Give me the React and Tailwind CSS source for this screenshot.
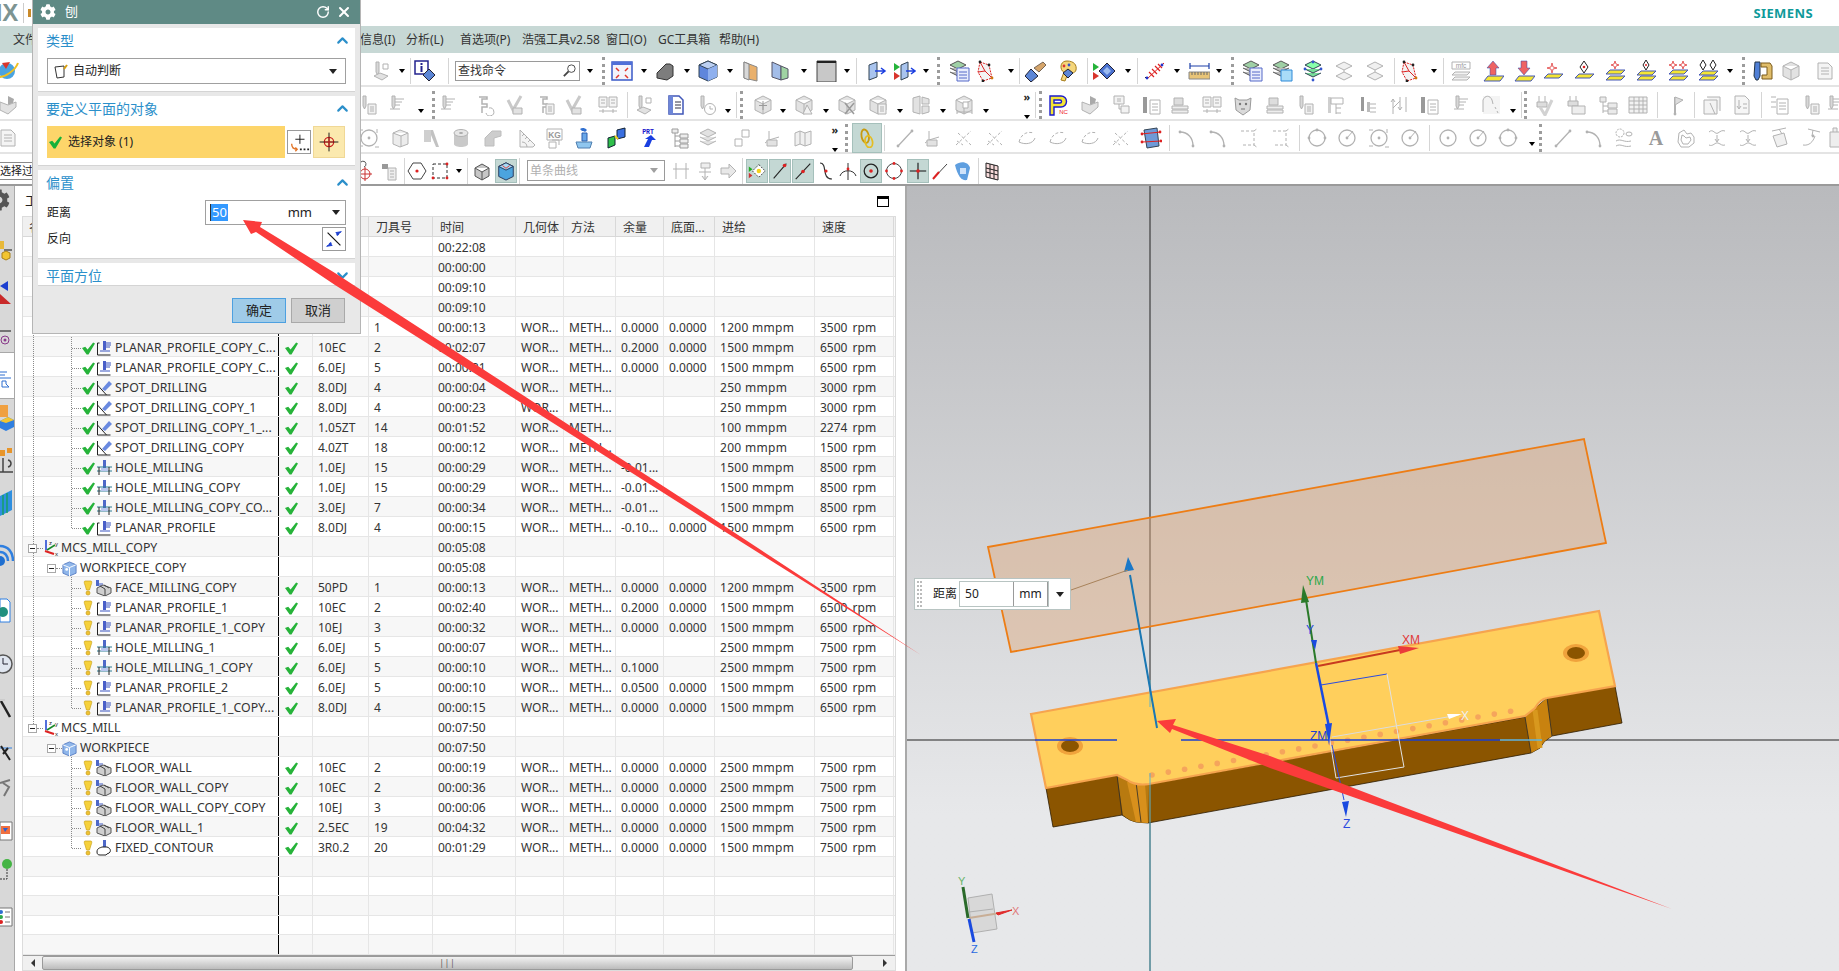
import React from "react";
import { ChevronUp, ChevronDown, RotateCw, X as CloseIcon } from "lucide-react";
import { FaCog } from "react-icons/fa";

const G = "#b2b2b2";
const L = "#e2e2e2";

// gray shapes reused by most of the disabled toolbar buttons
const spindle = <path d="M6 2h3v10l-1.5 3L6 12z" fill="#d8d8d8" stroke={G} />;
const teeth = <path d="M9 5h9M9 8h7M9 11h5M4 15h10" stroke={G} fill="none" />;
const docG = <path d="M11 10h8v10h-8zM13 13h4M13 15h4M13 17h4" fill="#f2f2f2" stroke={G} />;
const cubeG = <path d="M11 2l8 4v10l-8 4-8-4V6zM3 6l8 4 8-4M11 10v10" fill={L} stroke={G} />;
const dashCircle = <circle cx="11" cy="11" r="8" fill="none" stroke={G} strokeWidth="1.3" />;
const dot = (x, y, c = G) => <circle cx={x} cy={y} r="1.4" fill={c} />;

const ICONS = {
  mill: <>{spindle}{teeth}</>,
  millDoc: <>{spindle}{docG}</>,
  millBox: <>{spindle}<path d="M4 16l6-3 8 3-6 4z" fill={L} stroke={G} /><path d="M13 4h5v5h-5z" fill="none" stroke={G} /></>,
  millClock: <>{spindle}<circle cx="15" cy="15" r="5.5" fill="#fff" stroke={G} /><path d="M15 12v3h3" stroke={G} fill="none" /></>,
  sPath: <><path d="M6 3h8v2H9v5h5v3H9v6" fill="none" stroke={G} strokeWidth="1.5" /><path d="M13 19a4 4 0 1 0 3-5" fill="none" stroke={G} /></>,
  sDoc: <><path d="M5 3h7v2H8v5h4v3H8v6" fill="none" stroke={G} strokeWidth="1.5" />{docG}</>,
  check: <><path d="M4 6l5 10 8-14" fill="none" stroke="#c9c9c9" strokeWidth="3" /><path d="M9 14h9v6H9z" fill={L} stroke={G} /></>,
  twoDoc: <path d="M2 3h8v10H2zM12 3h8v10h-8zM4 6h4M4 9h4M14 6h4M14 9h4M2 17h18M6 15v4M16 15v4" fill="#f4f4f4" stroke={G} />,
  doc: <path d="M4 3h10l4 4v12H4zM7 8h8M7 11h8M7 14h8" fill="#f4f4f4" stroke={G} />,
  docBlue: <><path d="M4 2h10l4 4v14H4z" fill="#fff" stroke="#4057b8" strokeWidth="1.5" /><path d="M4 2h4v18H4z" fill="#6d86d8" /><path d="M10 8h6M10 11h6M10 14h6" stroke="#334" /></>,
  cubeG,
  cubeMove: <>{cubeG}<path d="M11 7v9M7 11.5h8" stroke="#9a9a9a" /></>,
  cubeTri: <>{cubeG}<path d="M14 11l5 9h-9z" fill="#f2f2f2" stroke={G} /></>,
  cubeX: <>{cubeG}<path d="M9 9l9 11M18 9L9 20" stroke="#9a9a9a" strokeWidth="1.5" /></>,
  cubeDoc: <>{cubeG}{docG}</>,
  cubeSplit: <><path d="M3 4l7-2v18l-7-2zM12 3l7 2v5h-7zM12 12h7v6l-7 2z" fill={L} stroke={G} /></>,
  cubeDim: <>{cubeG}<path d="M4 18h15M4 16v4M19 16v4" stroke={G} /><path d="M10 8h5v6h-5z" fill="#fff" stroke={G} /></>,
  wire: <path d="M4 6l7-3 8 3v11l-8 3-7-3zM4 6l8 3 7-3M12 9v11" fill="#ececec" stroke={G} />,
  grad: <><path d="M4 3h7v12H4z" fill="#cfcfcf" /><path d="M11 3l2 0 6 17h-3l-5-12z" fill="#c2c2c2" /></>,
  cyl: <><path d="M4 6v11c0 4 14 4 14 0V6z" fill="#c9c9c9" /><ellipse cx="11" cy="6" rx="7" ry="3.5" fill="#e6e6e6" stroke={G} /><ellipse cx="11" cy="6" rx="2" ry="1" fill="#aaa" /></>,
  wedge: <path d="M3 19v-8l7-7h9v5l-7 2v8z" fill="#cdcdcd" stroke="#bdbdbd" />,
  ruler: <path d="M4 3l15 15-2 2H4zM8 7l-2 2M11 10l-2 2M14 13l-2 2M6 15c3 0 5 2 5 5" fill="#f4f4f4" stroke={G} />,
  kg: <><path d="M3 2h15v11H3z" fill="#fff" stroke={G} /><text x="10.5" y="11" fontSize="8.5" fontWeight="700" textAnchor="middle" fill="#999" fontFamily="Liberation Sans">KG</text><path d="M5 15h7v6H5zM8 13h7v5" fill="none" stroke={G} /></>,
  gear: <><path d="M11 2l6 3-1 4-5 2z" fill="#aaa" /><path d="M3 8l8 3 8-3v5l-8 7-8-4z" fill={L} stroke={G} /></>,
  tree: <path d="M3 2h6v4H3zM6 6v14M6 9h5M6 14h5M6 19h5M11 7h8v4h-8zM11 12h8v4h-8zM11 17h8v4h-8z" fill="#ededed" stroke="#9c9c9c" />,
  layerG: <path d="M11 2l8 4-8 4-8-4zM3 10l8 4 8-4M3 14l8 4 8-4" fill={L} stroke={G} />,
  layerFlat: <><path d="M11 2l8 4-8 4-8-4zM11 12l8 4-8 4-8-4z" fill="#f0f0f0" stroke={G} /><path d="M11 10v2" stroke={G} /></>,
  squares: <path d="M11 3h7v7h-7zM4 12h7v7H4z" fill="#fff" stroke={G} />,
  axes: <><path d="M7 4v9l-4 3M7 13l10-3" fill="none" stroke={G} /><path d="M5 13h10v6H5z" fill={L} stroke={G} /></>,
  map: <path d="M3 6l5-2 5 2 6-2v13l-6 2-5-2-5 2zM8 4v13M13 6v13" fill="#f0f0f0" stroke={G} />,
  circ: <>{dashCircle}{dot(11, 11)}</>,
  circCorner: <>{dashCircle}{dot(11, 11)}<path d="M1 3h4M19 2v4M1 19h4M17 20h4" stroke={G} /></>,
  circDot: <>{dashCircle}{dot(3, 11)}{dot(19, 11)}{dot(11, 3)}</>,
  circSlash: <>{dashCircle}{dot(11, 11)}<path d="M11 11l6-7" stroke={G} /></>,
  lineG: <><path d="M4 19L18 4" stroke={G} strokeWidth="1.3" />{dot(4, 19)}{dot(18, 4)}</>,
  arcG: <><path d="M4 5c8 0 13 6 13 14" fill="none" stroke={G} strokeWidth="1.3" />{dot(4, 5)}{dot(17, 19)}</>,
  arcDash: <><path d="M3 15c2-8 8-11 15-9" fill="none" stroke={G} strokeDasharray="3 2" /><path d="M3 15c6 3 14 2 16-4" fill="none" stroke={G} /></>,
  cornerDash: <path d="M3 4h13v14H3M16 4l4-3M16 18l4 3" fill="none" stroke={G} strokeDasharray="3 2" />,
  cross: <path d="M3 18L18 4M5 6l13 12M4 14l6 4" fill="none" stroke={G} strokeDasharray="3 2" />,
  bear: <><path d="M3 4l4 2h8l4-2-1 12-7 5-7-5z" fill="#dadada" stroke="#9a9a9a" /><circle cx="8" cy="10" r="1.2" fill="#777" /><circle cx="14" cy="10" r="1.2" fill="#777" /><path d="M9 15h4" stroke="#777" /></>,
  stamp: <><path d="M5 4h9v7H5z" fill="#ddd" stroke={G} /><path d="M3 12h16v3H3zM3 16h16v3H3z" fill="#eee" stroke={G} /></>,
  tools: <><path d="M4 3h3v16H4z" fill="#cfcfcf" /><path d="M7 4h12v6H7zM12 10v10M12 14h5M12 19h5" fill="none" stroke={G} /></>,
  bars: <><path d="M4 3h3v14H4z" fill="#999" /><path d="M10 8h3v10h-3z" fill="#bbb" /><path d="M13 10h6M13 14h6M13 18h6" stroke={G} /></>,
  arrowsUD: <path d="M5 20V5l-2 3M5 5l2 3M12 3v13l-2-3M12 16l2-3M18 3v15M5 14l7-7" fill="none" stroke={G} />,
  boxArrow: <><path d="M3 3h4v16H3z" fill="#999" /><path d="M10 6h10v14H10zM12 10h6M12 13h6M12 16h6" fill="#fff" stroke={G} /></>,
  todo: <path d="M5 2h10v8H5zM8 5h4M8 7h4M10 10v5h2M12 12h8v7h-8z" fill="#f3f3f3" stroke={G} />,
  profile: <><path d="M3 2h17v18H3z" fill="#f4f4f4" /><path d="M3 18V6c2-5 7-5 9 0l1 4M15 13l1 2M17 17l1 2" fill="none" stroke={G} /></>,
  plug: <><path d="M5 2v6M11 2v6M3 8h10v5H3z" stroke={G} fill="#ddd" /><path d="M6 13l5 8 7-15" fill="none" stroke="#d2d2d2" strokeWidth="3" /></>,
  plugBox: <><path d="M5 2v5M11 2v5M3 7h10v5H3z" stroke={G} fill="#ddd" /><path d="M7 12h13v8H7z" fill="#eee" stroke={G} /></>,
  plugTree: <path d="M3 3h6v5H3zM6 8v11M6 12h5M6 17h5M11 9h9v5h-9zM11 15h9v5h-9z" fill="#eaeaea" stroke={G} />,
  tableG: <path d="M2 3h18v16H2zM2 7h18M2 11h18M2 15h18M7 3v16M12 3v16M16 3v16" fill="#f2f2f2" stroke={G} />,
  flag: <><path d="M8 3v17" stroke={G} strokeWidth="2" /><path d="M8 3l8 3-8 5z" fill="#ddd" stroke={G} />{dot(8, 20)}</>,
  pages: <path d="M3 6h13v14H3zM6 3h13v14M9 9l5 11" fill="#f3f3f3" stroke={G} />,
  pageDown: <><path d="M4 2h10l4 4v14H4z" fill="#f6f6f6" stroke={G} /><path d="M8 6v8M6 12l2 3 2-3M12 10h4M12 14h4" stroke={G} fill="none" /></>,
  target: <><path d="M5 4a3 3 0 1 1 4 3" fill="none" stroke="#555" /><circle cx="10" cy="14" r="5" fill="none" stroke="#c83232" /><path d="M3 14h14M10 7v14" stroke="#c83232" /></>,
  gearGray: <><path d="M3 4h6v5H3z" fill="#999" /><path d="M9 8h8v12H9zM11 11h4M11 14h4M11 17h4" fill="#eee" stroke={G} /></>,
  hexDot: <><path d="M7 3h8l5 8-5 8H7l-5-8z" fill="#fff" stroke="#444" /><circle cx="11" cy="11" r="1.6" fill="#d22" /></>,
  rectDash: <><path d="M4 4h14v14H4z" fill="none" stroke="#333" strokeDasharray="3 2" />{dot(4, 18, "#d22")}{dot(18, 18, "#d22")}{dot(18, 4, "#d22")}</>,
  cubeSmall: <path d="M4 8l7-4 7 4v8l-7 4-7-4zM4 8l7 4 7-4M11 12v8" fill="#c6c6c6" stroke="#555" />,
  cubeBlue: <><path d="M11 2l8 4v11l-8 4-8-4V6z" fill="#4ba4de" stroke="#235" /><path d="M3 6l8 4 8-4-8-4z" fill="#a9d9f4" stroke="#235" /><path d="M7 5l4 3 4-3" stroke="#d33" fill="none" /></>,
  barG: <path d="M6 3v16M16 3v16M3 9h16" stroke={G} fill="none" />,
  treeG: <path d="M7 3h9v5H7zM11 8v11M5 12h12M8 16l3 4 3-4" fill="#eee" stroke={G} />,
  arrowG: <path d="M4 8h8V4l7 7-7 7v-4H4z" fill="#e8e8e8" stroke={G} />,
  nodeMove: <><path d="M2 6l4 3-4 3z" fill="#2a2" /><path d="M2 13l4 3-4 3z" fill="#c33" /><path d="M13 4l7 7-7 7-7-7z" fill="#fff" stroke="#333" strokeDasharray="2 1.5" /><circle cx="13" cy="11" r="2.4" fill="#f2d21c" /></>,
  nodeLine: <><path d="M4 19L18 3" stroke="#222" strokeWidth="1.2" /><circle cx="16" cy="5" r="2" fill="#d22" /></>,
  nodeLine2: <><path d="M3 20L19 3" stroke="#222" strokeWidth="1.2" /><circle cx="11" cy="11.5" r="2" fill="#d22" /></>,
  curveS: <><path d="M5 3c8 0 1 16 12 16" fill="none" stroke="#333" strokeWidth="1.2" /><circle cx="11" cy="11" r="1.6" fill="#d22" /></>,
  curveT: <><path d="M3 16c2-7 14-7 16 0M11 3v17" fill="none" stroke="#333" />{dot(11, 9, "#d22")}</>,
  circRed: <><circle cx="11" cy="11" r="7.5" fill="none" stroke="#222" strokeWidth="1.4" /><circle cx="11" cy="11" r="2" fill="#d22" /></>,
  circFour: <><circle cx="11" cy="11" r="7.5" fill="none" stroke="#444" />{dot(11, 3.5, "#d22")}{dot(11, 18.5, "#d22")}{dot(3.5, 11, "#d22")}{dot(18.5, 11, "#d22")}</>,
  plus: <><path d="M11 2v18M2 11h18" stroke="#111" strokeWidth="1.2" /><circle cx="11" cy="11" r="2" fill="#d22" /></>,
  lineRed: <><path d="M4 19L18 4" stroke="#444" /><path d="M4 19l6-7" stroke="#d22" strokeWidth="2" /></>,
  surf: <><path d="M4 5c6-5 14-3 15 3l-3 12c-5 1-9-3-12-15z" fill="#5f9fe0" /><path d="M9 8h6v6H9z" fill="#cfe3fa" /></>,
  gridBlack: <path d="M5 3l12 3v14L5 17zM5 8l12 3M5 12l12 3M9 4v14M13 5v14" fill="#f7dada" stroke="#222" />,
  info: <><path d="M1 1h13v13H1z" fill="#fff" stroke="#23238e" strokeWidth="1.5" /><path d="M6.5 3h2v2h-2zM6.5 6h2v6h-2z" fill="#23238e" /><path d="M15 9l6 6-6 6-6-6z" fill="#5c86d6" stroke="#223" /></>,
  frame: <><path d="M1 2h20v18H1z" fill="#f3f3fb" stroke="#3a5ac8" strokeWidth="1.5" /><path d="M1 2h20v3H1z" fill="#4f6fd8" /><path d="M5 8l3 3M17 8l-3 3M5 18l3-3M17 18l-3-3" stroke="#e2362c" strokeWidth="1.5" /></>,
  bracket: <path d="M3 13l9-9h4l3 2v10l-6 4-10-2z" fill="#7d7d7d" stroke="#333" />,
  cubeB: <><path d="M11 1l9 4v12l-9 4-9-4V5z" fill="#5f86dc" stroke="#345" /><path d="M2 5l9 4 9-4-9-4z" fill="#bcd0f2" stroke="#345" /><path d="M11 9v12l9-4V5z" fill="#8fb0ee" /></>,
  planeO: <><path d="M4 2l13 5v14L4 18z" fill="#e9b06c" stroke="#888" /><path d="M4 2l5 2v16l-5-2z" fill="#d8d8d8" stroke="#888" /></>,
  planeG: <><path d="M3 2l9 4v14l-9-3z" fill="#a3bde8" stroke="#556" /><path d="M12 6l7 3v9l-7 2z" fill="#9fd3a3" stroke="#556" /></>,
  rectBlack: <><path d="M2 1h19v21H2z" fill="#c8c8c8" stroke="#444" /><path d="M2 1h19v2H2z" fill="#222" /></>,
  arrowBox: <><path d="M4 5l8-3v15l-8 3z" fill="#a9c4ee" stroke="#345" /><path d="M10 11h9M16 8l4 3-4 3" stroke="#1c3fe0" strokeWidth="1.5" fill="none" /></>,
  arrowBox2: <><path d="M0 3l6 4-6 4z" fill="#25b33a" /><path d="M0 12l6 4-6 4z" fill="#d8352c" /><path d="M7 5l7-3v15l-7 3z" fill="#a9c4ee" stroke="#345" /><path d="M12 11h8M17 8l4 3-4 3" stroke="#1c3fe0" strokeWidth="1.5" fill="none" /></>,
  layers: <><path d="M10 1l8 4-8 4-8-4z" fill="#9fd0a5" stroke="#555" /><path d="M2 8l8 4 8-4M2 12l8 4 8-4" fill="#bbb" stroke="#555" /><path d="M9 8h12v13H9z" fill="#e9edfc" stroke="#5468c8" /><path d="M11 12h8M11 15h8M11 18h8" stroke="#5468c8" /></>,
  layersBox: <><path d="M10 1l8 4-8 4-8-4z" fill="#9fd0a5" stroke="#555" /><path d="M2 8l8 4 8-4M2 12l8 4 8-4" fill="#bbb" stroke="#555" /><path d="M10 10h11v11H10z" fill="#a9dcf8" stroke="#2f8ad8" /></>,
  layersBlue: <><path d="M11 1l8 4-8 4-8-4z" fill="#8fa" stroke="#345" /><path d="M3 9l8 4 8-4M3 13l8 4 8-4" fill="#7d9" stroke="#345" />{dot(11, 2, "#35c")}{dot(3, 9, "#35c")}{dot(19, 9, "#35c")}{dot(11, 20, "#35c")}</>,
  redFrame: <><path d="M5 2l9 3 3 13-9 3-5-9z" fill="#f3f3f3" stroke="#d22" strokeDasharray="2 1" /><path d="M5 2l5 9 7 7M10 11l-7 1" stroke="#d22" fill="none" />{dot(5, 2, "#222")}{dot(14, 5, "#222")}{dot(17, 18, "#c71")}{dot(8, 21, "#222")}</>,
  diamondHand: <><path d="M6 9l7 7-7 6-6-6z" fill="#5c86d6" stroke="#223" /><path d="M9 8l9-6 3 3-7 7z" fill="#d6a56a" stroke="#765" /></>,
  palette: <><path d="M11 1c7 0 10 4 9 9-1 4-6 3-8 3l-3 8-4-1 3-8C4 11 3 1 11 1z" fill="#f5d67a" stroke="#a67c1a" /><circle cx="8" cy="6" r="1.4" fill="#d33" /><circle cx="13" cy="5" r="1.4" fill="#35c" /><path d="M12 9l5 4-5 5-5-5z" fill="#5c86d6" stroke="#223" /></>,
  diaArrow: <><path d="M0 3l6 4-6 4z" fill="#25b33a" /><path d="M0 12l6 4-6 4z" fill="#d8352c" /><path d="M14 3l8 8-8 8-8-8z" fill="#4b72d0" stroke="#223" /><path d="M14 7l4 4-4 4-4-4z" fill="#9dbcf0" /></>,
  hatch: <><path d="M3 19L20 3" stroke="#d22" /><path d="M5 12l5 5M8 9l5 5M11 6l5 5M14 4l4 4" stroke="#d22" strokeWidth="1.2" /><path d="M3 19l-2-2" stroke="#222" />{dot(3, 18, "#23c")}{dot(18, 5, "#23c")}</>,
  dimRuler: <><path d="M2 6h19M2 3v6M21 3v6" stroke="#1c3fa8" strokeWidth="1.2" /><path d="M1 12h21v7H1z" fill="#e8c477" stroke="#888" /><path d="M4 12v3M7 12v3M10 12v3M13 12v3M16 12v3M19 12v3" stroke="#666" /></>,
  mfc: <><path d="M2 2h18v7H2z" fill="#fff" stroke={G} /><text x="11" y="8" fontSize="6.5" textAnchor="middle" fill="#999" fontFamily="Liberation Sans">mfc</text><path d="M5 12h15l-3 3H2zM5 17h15l-3 3H2z" fill="#f2f2f2" stroke={G} /></>,
  upY: <><path d="M11 1l6 7h-3v7H8V8H5z" fill="#ee6363" stroke="#2f48a8" strokeWidth=".5" /><path d="M6 16h16l-4 5H2z" fill="#f4e534" stroke="#4557b5" /></>,
  downY: <><path d="M11 15l6-7h-3V1H8v7H5z" fill="#ee6363" stroke="#2f48a8" strokeWidth=".5" /><path d="M6 16h16l-4 5H2z" fill="#f4e534" stroke="#4557b5" /></>,
  starY: <><path d="M10 3l1 4 4 1-4 1-1 4-1-4-4-1 4-1z" fill="#fff" stroke="#d22" strokeWidth=".7" /><path d="M6 14h15l-4 4H2z" fill="#f4e534" stroke="#4557b5" /></>,
  diaY: <><path d="M11 1l4 6-4 6-4-6z" fill="#fff" stroke="#222" /><circle cx="11" cy="7" r="1.3" fill="#d22" /><path d="M6 14h15l-4 4H2z" fill="#f4e534" stroke="#4557b5" /></>,
  starYY: <><path d="M11 1l1 3 3 1-3 1-1 3-1-3-3-1 3-1z" fill="#fff" stroke="#d22" strokeWidth=".7" /><path d="M6 10h15l-4 4H2zM6 16h15l-4 4H2z" fill="#f4e534" stroke="#4557b5" /></>,
  diaYY: <><path d="M11 0l3 5-3 5-3-5z" fill="#fff" stroke="#222" /><circle cx="11" cy="5" r="1" fill="#d22" /><path d="M6 11h15l-4 4H2zM6 16h15l-4 4H2z" fill="#f4e534" stroke="#4557b5" /></>,
  stars2: <><path d="M6 1l1 3 3 1-3 1-1 3-1-3-3-1 3-1zM16 1l1 3 3 1-3 1-1 3-1-3-3-1 3-1z" fill="#fff" stroke="#d22" strokeWidth=".7" /><path d="M6 10h15l-4 4H2zM6 16h15l-4 4H2z" fill="#f4e534" stroke="#4557b5" /></>,
  dias2: <><path d="M6 0l3 5-3 5-3-5zM16 0l3 5-3 5-3-5z" fill="#fff" stroke="#222" /><path d="M6 11h15l-4 4H2zM6 16h15l-4 4H2z" fill="#f4e534" stroke="#4557b5" /></>,
  joinBlue: <><path d="M4 2h5v14l-2 4H5l-2-4z" fill="#4f7fd6" stroke="#234" /><path d="M10 3h9l2 3v13H11v-4h5V7h-6z" fill="#e0bd6a" stroke="#7a5a1a" /></>,
  globe: <><circle cx="10" cy="11" r="8" fill="#4aa3e0" /><path d="M2 17C8 17 18 11 21 3" stroke="#f0c020" strokeWidth="2" fill="none" /><path d="M5 3l4 6 4-7z" fill="#d8352c" /></>,
  chain: <><ellipse cx="9" cy="9" rx="4" ry="7.5" transform="rotate(-12 9 9)" fill="none" stroke="#c79a10" strokeWidth="2" /><ellipse cx="13" cy="15" rx="4" ry="6.5" transform="rotate(-12 13 15)" fill="none" stroke="#e5bd22" strokeWidth="2" /></>,
  millBlue: <><path d="M7 2a5 5 0 0 1 7 1l-2 2a3 3 0 0 0-3-1z" fill="#2f6fd0" /><path d="M9 6h5v8H9z" fill="#6aa7e8" stroke="#2a5fae" /><path d="M3 15h16l-2 6H5z" fill="#8fc6ef" stroke="#4f7fb0" /></>,
  cubesGreen: <><path d="M2 11l7-2v9l-7 3z" fill="#2fbf4a" stroke="#123" /><path d="M11 3l8-2v9l-8 2z" fill="#3a6fe0" stroke="#123" /><path d="M9 9l3 3" stroke="#f2d21c" strokeWidth="2" /></>,
  prt: <><text x="10" y="7" fontSize="6.5" textAnchor="middle" fill="#1a1acc" fontFamily="Liberation Mono" fontWeight="700">PRT</text><path d="M6 20l4-8-3 0 6-4 5 5-4 0-3 7z" fill="#1a3fe0" /></>,
  winBlue: <><path d="M4 3l13-2 2 18-12 2z" fill="#6f9ad8" stroke="#345" /><path d="M1 7l20-2M2 15l20-1" stroke="#d22" />{dot(2, 7, "#d22")}{dot(20, 5, "#d22")}{dot(2, 15, "#d22")}{dot(21, 14, "#d22")}</>,
  textA: <text x="11" y="18" fontSize="20" textAnchor="middle" fill="#9a9a9a" fontFamily="Liberation Serif" fontWeight="700">A</text>,
  heartBox: <path d="M4 6l5-3 3 4 4-1 3 4v6l-5 4H6l-3-5zM7 8l2 1 2 2 4-1 1 3-3 4H8l-2-4z" fill="#fff" stroke={G} />,
  curves: <><path d="M3 5c4-4 6 3 9 1s4-3 7-2M3 18c4 2 6-3 9-2s4 3 7 2" fill="none" stroke={G} /><path d="M11 8v6M9 12l2 3 2-3" stroke={G} fill="none" /></>,
  circles: <><ellipse cx="7" cy="6" rx="4" ry="4" fill="none" stroke={G} strokeDasharray="2 1" /><ellipse cx="16" cy="7" rx="3" ry="2" fill="none" stroke={G} /><path d="M3 14c5-3 8 2 15 0M3 19c5-3 8 2 15 0" fill="none" stroke={G} /></>,
  sheet: <><path d="M4 4l14-3M11 2l3 5" stroke={G} /><path d="M5 9l11-3 3 11-10 3z" fill="#f0f0f0" stroke={G} /></>,
  trim: <><path d="M8 2l12 3M3 18c6 1 10-3 12-9M13 3l-1 6" fill="none" stroke={G} />{dot(13, 9)}</>,
  pillar: <path d="M6 5h10v15H6zM9 5V1h4v4" fill="#eee" stroke={G} />,
  pNc: <><path d="M3 2h11a5 5 0 0 1 0 11H7v8H3zM7 6v3h6a1.5 1.5 0 0 0 0-3z" fill="#f4e534" stroke="#1a1acc" strokeWidth="1.4" /><text x="16.5" y="20" fontSize="6" textAnchor="middle" fill="#e12" fontFamily="Liberation Sans">NC</text></>,
  docGray: <path d="M4 3h14v16H4zM8 8l6 6M14 8l-6 6" fill="#f5f5f5" stroke={G} />,
  ptList: <path d="M3 3h5M3 8h5M3 13h5M9 5h11v15H9zM11 9h7M11 12h7M11 15h7" fill="none" stroke={G} />,
};

const Ic = ({ n, className = "w-[22px] h-[22px]" }) => (
  <svg viewBox="0 0 22 22" className={className}>{ICONS[n]}</svg>
);

const row1 = [
  [8, "globe"], [381, "millBox"], [402, "^"], [410, "|"], [425, "info"], [448, "|"], [517.5, "search"], [590, "^"], [603, ":"],
  [622, "frame"], [644, "^"], [665, "bracket"], [687, "^"], [708, "cubeB"], [730, "^"], [751, "planeO"], [780, "planeG"], [804, "^"],
  [826, "rectBlack"], [847, "^"], [856, "|"], [876, "arrowBox"], [905, "arrowBox2"], [926, "^"], [938, ":"], [959, "layers"], [986, "redFrame"],
  [1011, "^"], [1019, "|"], [1036, "diamondHand"], [1067, "palette"], [1087, "|"], [1104, "diaArrow"], [1128, "^"], [1137, "|"], [1155, "hatch"],
  [1177, "^"], [1199, "dimRuler"], [1219, "^"], [1232, ":"], [1252, "layers"], [1282, "layersBox"], [1313, "layersBlue"], [1344, "layerFlat"], [1375, "layerFlat"],
  [1394, "|"], [1410, "redFrame"], [1434, "^"], [1443, "|"], [1461, "mfc"], [1493, "upY"], [1524, "downY"], [1553, "starY"], [1584, "diaY"],
  [1615, "starYY"], [1646, "diaYY"], [1678, "stars2"], [1708, "dias2"], [1730, "^"], [1743, ":"], [1762, "joinBlue"], [1791, "cubeG"], [1825, "doc"],
];

const row2 = [
  [8, "gear"], [368, "millDoc"], [397, "mill"], [421, "v"], [433, ":"], [448, "mill"], [484, "sPath"], [515, "check"], [546, "sDoc"], [574, "check"], [608, "twoDoc"], [627, "|"],
  [644, "millBox"], [676, "docBlue"], [706, "millClock"], [728, "v"], [736, "|"], [741, ":"], [763, "cubeMove"], [783, "v"], [804, "cubeTri"], [826, "v"], [847, "cubeX"],
  [878, "cubeDoc"], [900, "v"], [921, "cubeSplit"], [943, "v"], [964, "cubeDim"], [986, "v"], [1027, "more"], [1035, "|"], [1040, ":"], [1058, "pNc"], [1090, "gear"],
  [1120, "todo"], [1151, "boxArrow"], [1180, "stamp"], [1212, "twoDoc"], [1243, "bear"], [1275, "stamp"], [1305, "millDoc"], [1335, "tools"], [1368, "bars"], [1399, "arrowsUD"], [1429, "boxArrow"],
  [1461, "mill"], [1491, "profile"], [1513, "v"], [1521, "|"], [1525, ":"], [1545, "plug"], [1576, "plugBox"], [1608, "plugTree"], [1638, "tableG"], [1657, "|"], [1678, "flag"], [1694, "|"],
  [1712, "pages"], [1742, "pageDown"], [1761, "|"], [1779, "ptList"], [1811, "millDoc"], [1835, "mill"],
];

const row3 = [
  [8, "doc"], [369, "circCorner"], [400, "wire"], [431, "grad"], [461, "cyl"], [493, "wedge"], [527, "ruler"], [555, "kg"], [584, "millBlue"], [617, "cubesGreen"], [649, "prt"],
  [680, "tree"], [708, "layerG"], [742, "squares"], [773, "axes"], [803, "map"], [835, "more"], [846, ":"], [866.5, "chain", 1, 30], [884, "|"], [905, "lineG"], [933, "axes"], [964, "cross"],
  [995, "cross"], [1027, "arcDash"], [1058, "arcDash"], [1090, "arcDash"], [1121, "cross"], [1151, "winBlue"], [1169, "|"], [1187, "arcG"], [1218, "arcG"], [1249, "cornerDash"], [1281, "cornerDash"],
  [1299, "|"], [1317, "circDot"], [1347, "circSlash"], [1379, "circCorner"], [1410, "circSlash"], [1429, "|"], [1448, "circ"], [1478, "circSlash"], [1508, "circDot"], [1532, "v"], [1540, ":"],
  [1563, "lineG"], [1594, "arcG"], [1624, "circles"], [1656, "textA"], [1686, "heartBox"], [1717, "curves"], [1748, "curves"], [1779, "sheet"], [1811, "trim"], [1835, "pillar"],
];

const row4 = [
  [16, "filter"], [366, "target"], [390, "gearGray"], [404, "|"], [417, "hexDot"], [440, "rectDash"], [459, "^"], [467, "|"], [482, "cubeSmall"], [506, "cubeBlue", 1], [519, "|"],
  [596, "combo"], [681, "barG"], [705, "treeG"], [728, "arrowG"], [742, "|"], [757, "nodeMove", 1], [779.5, "nodeLine", 1], [802.5, "nodeLine2", 1], [826, "curveS"], [848, "curveT"],
  [871, "circRed", 1], [894, "circFour"], [918, "plus", 1], [940, "lineRed"], [962, "surf"], [978, "|"], [992, "gridBlack"],
];

const widthOf = ([, n, , w]) => {
  if (w) return w;
  if (n === "|") return 1;
  if (n === ":") return 3;
  if (n === "^" || n === "v") return 7;
  if (n === "search") return 125;
  if (n === "combo") return 138;
  if (n === "filter") return 32;
  if (n === "more") return 12;
  return 22;
};

const Caret = ({ low }) => (
  <div className={`w-0 h-0 ml-0 border-x-[3.5px] border-t-[4px] border-x-transparent border-t-black ${low ? "mt-[12px]" : ""}`} />
);

const ToolItem = ({ item }) => {
  const [, n, on] = item;
  if (n === "|") return <div className="w-px h-[26px] bg-[#d5d5d5]" />;
  if (n === ":") return <div className="w-[3px] h-[28px] border-l-[3px] border-dotted border-[#9c9c9c]" />;
  if (n === "^") return <Caret />;
  if (n === "v") return <Caret low />;
  if (n === "more")
    return (
      <div className="w-[12px] h-[28px] flex flex-col items-center justify-between text-[11px] leading-[12px] font-bold text-[#222]">
        <span>»</span>
        <Caret />
      </div>
    );
  if (n === "search")
    return (
      <div className="w-[125px] h-[20px] border border-[#9a9a9a] bg-white flex items-center justify-between pl-[2px] pr-[2px] text-[12px] text-[#333]">
        <span>查找命令</span>
        <svg viewBox="0 0 16 16" className="w-[15px] h-[15px]">
          <circle cx="10" cy="6" r="4" fill="#fff" stroke="#444" />
          <path d="M7 9l-5 5" stroke="#444" strokeWidth="2" />
        </svg>
      </div>
    );
  if (n === "combo")
    return (
      <div className="w-[138px] h-[21px] border border-[#9a9a9a] bg-white flex items-center justify-between pl-[2px] pr-[6px] text-[12px] text-[#b0b0b0]">
        <span>单条曲线</span>
        <div className="w-0 h-0 border-x-[4px] border-t-[5px] border-x-transparent border-t-[#a0a0a0]" />
      </div>
    );
  if (n === "filter")
    return (
      <div className="w-[32px] h-[18px] border-y border-[#8a8a8a] bg-white text-[11px] leading-[16px] text-[#222] overflow-hidden whitespace-nowrap">选择过</div>
    );
  if (on === 1)
    return (
      <div className={`${item[3] ? "w-[30px] h-[30px]" : "w-[22px] h-[24px]"} flex items-center justify-center bg-[#c4d8d4] border border-[#a5c0bb]`}>
        <Ic n={n} className="w-[20px] h-[20px] shrink-0" />
      </div>
    );
  return <Ic n={n} />;
};

// each button sits at its own spot in the bar, so the gap is worked out from the list
const Toolbar = ({ items, className }) => {
  let right = 0;
  return (
    <div className={`flex items-center pt-[3px] border-b-2 border-[#e4e4e4] ${className}`}>
      {items.map((item, i) => {
        const w = widthOf(item);
        const left = item[0] - w / 2;
        const gap = left - right;
        right = left + w;
        return (
          <div key={i} className="shrink-0 flex items-center justify-center" style={{ marginLeft: gap, width: w }}>
            <ToolItem item={item} />
          </div>
        );
      })}
    </div>
  );
};

const menu = [
  ["文件", 13], ["信息(I)", 360], ["分析(L)", 406], ["首选项(P)", 460], ["浩强工具v2.58", 522], ["窗口(O)", 606], ["GC工具箱", 658], ["帮助(H)", 719],
];

const W = "WOR...";
const M = "METH...";
const Z = "0.0000";
const op = (name, icon, bulb, tool, no, time, stock, floor, feed, speed, last) => ({
  name, icon, bulb, tool, no, time, stock, floor, feed, speed, last, kind: "op",
});

const rows = [
  { kind: "hidden", time: "00:22:08" },
  { kind: "hidden", time: "00:00:00" },
  { kind: "hidden", time: "00:09:10" },
  { kind: "hidden", time: "00:09:10" },
  { kind: "hidden", no: "1", time: "00:00:13", wor: true, stock: Z, floor: Z, feed: "1200 mmpm", speed: "3500 rpm" },
  op("PLANAR_PROFILE_COPY_C...", "planar", false, "10EC", "2", "00:02:07", "0.2000", Z, "1500 mmpm", "6500 rpm"),
  op("PLANAR_PROFILE_COPY_C...", "planar", false, "6.0EJ", "5", "00:00:31", Z, Z, "1500 mmpm", "6500 rpm"),
  op("SPOT_DRILLING", "spot", false, "8.0DJ", "4", "00:00:04", "", "", "250 mmpm", "3000 rpm"),
  op("SPOT_DRILLING_COPY_1", "spot", false, "8.0DJ", "4", "00:00:23", "", "", "250 mmpm", "3000 rpm"),
  op("SPOT_DRILLING_COPY_1_...", "spot", false, "1.05ZT", "14", "00:01:52", "", "", "100 mmpm", "2274 rpm"),
  op("SPOT_DRILLING_COPY", "spot", false, "4.0ZT", "18", "00:00:12", "", "", "200 mmpm", "1500 rpm"),
  op("HOLE_MILLING", "hole", false, "1.0EJ", "15", "00:00:29", "-0.01...", "", "1500 mmpm", "8500 rpm"),
  op("HOLE_MILLING_COPY", "hole", false, "1.0EJ", "15", "00:00:29", "-0.01...", "", "1500 mmpm", "8500 rpm"),
  op("HOLE_MILLING_COPY_CO...", "hole", false, "3.0EJ", "7", "00:00:34", "-0.01...", "", "1500 mmpm", "8500 rpm"),
  op("PLANAR_PROFILE", "planar", false, "8.0DJ", "4", "00:00:15", "-0.10...", Z, "1500 mmpm", "6500 rpm", true),
  { kind: "mcs", name: "MCS_MILL_COPY", time: "00:05:08" },
  { kind: "wp", name: "WORKPIECE_COPY", time: "00:05:08" },
  op("FACE_MILLING_COPY", "face", true, "50PD", "1", "00:00:13", Z, Z, "1200 mmpm", "3500 rpm"),
  op("PLANAR_PROFILE_1", "planar", true, "10EC", "2", "00:02:40", "0.2000", Z, "1500 mmpm", "6500 rpm"),
  op("PLANAR_PROFILE_1_COPY", "planar", true, "10EJ", "3", "00:00:32", Z, Z, "1500 mmpm", "6500 rpm"),
  op("HOLE_MILLING_1", "hole", true, "6.0EJ", "5", "00:00:07", "", "", "2500 mmpm", "7500 rpm"),
  op("HOLE_MILLING_1_COPY", "hole", true, "6.0EJ", "5", "00:00:10", "0.1000", "", "2500 mmpm", "7500 rpm"),
  op("PLANAR_PROFILE_2", "planar", true, "6.0EJ", "5", "00:00:10", "0.0500", Z, "1500 mmpm", "6500 rpm"),
  op("PLANAR_PROFILE_1_COPY...", "planar", true, "8.0DJ", "4", "00:00:15", Z, Z, "1500 mmpm", "6500 rpm", true),
  { kind: "mcs", name: "MCS_MILL", time: "00:07:50", end: true },
  { kind: "wp", name: "WORKPIECE", time: "00:07:50", end: true },
  op("FLOOR_WALL", "face", true, "10EC", "2", "00:00:19", Z, Z, "2500 mmpm", "7500 rpm"),
  op("FLOOR_WALL_COPY", "face", true, "10EC", "2", "00:00:36", Z, Z, "2500 mmpm", "7500 rpm"),
  op("FLOOR_WALL_COPY_COPY", "face", true, "10EJ", "3", "00:00:06", Z, Z, "2500 mmpm", "7500 rpm"),
  op("FLOOR_WALL_1", "face", true, "2.5EC", "19", "00:04:32", Z, Z, "1500 mmpm", "7500 rpm"),
  op("FIXED_CONTOUR", "contour", true, "3R0.2", "20", "00:01:29", Z, Z, "1500 mmpm", "7500 rpm", true),
  { kind: "empty" },
  { kind: "empty" },
  { kind: "empty" },
  { kind: "empty" },
  { kind: "empty" },
];

const OpIcon = ({ type }) => {
  if (type === "planar")
    return (
      <svg viewBox="0 0 16 16" className="w-[16px] h-[16px]">
        <path d="M1.5 3v12h13M1.5 3h2" fill="none" stroke="#222" />
        <path d="M7 1h3v9H7z" fill="#4a5fc8" />
        <path d="M10 3h5M10 5h5M10 7h4M4 11h10" stroke="#3a55c0" />
      </svg>
    );
  if (type === "spot")
    return (
      <svg viewBox="0 0 16 16" className="w-[16px] h-[16px]">
        <path d="M1.5 1v14h13M1.5 5l9 10" fill="none" stroke="#222" />
        <path d="M6 9l7-8 3 3-7 7z" fill="#6a8ae0" />
      </svg>
    );
  if (type === "hole")
    return (
      <svg viewBox="0 0 16 16" className="w-[16px] h-[16px]">
        <path d="M7 0h3v8H7z" fill="#4e68c8" />
        <path d="M1 7h15M1 11h15" stroke="#2f7f96" />
        <path d="M3 7v8M13 7v8" stroke="#222" />
        <path d="M5 8h7v3H5z" fill="#b9c6ee" />
      </svg>
    );
  if (type === "face")
    return (
      <svg viewBox="0 0 16 16" className="w-[16px] h-[16px]">
        <path d="M0 0h3v6H0z" fill="#4e68c8" />
        <path d="M3 4h4M3 6h3" stroke="#3a55c0" />
        <path d="M1 8l6-3 8 3v5l-6 3-8-3z" fill="#cfcfcf" stroke="#555" />
        <path d="M4 6l5 3M8 5l5 3M9 9v7" stroke="#444" fill="none" />
      </svg>
    );
  return (
    <svg viewBox="0 0 16 16" className="w-[16px] h-[16px]">
      <path d="M7 0h3v7H7z" fill="#4e68c8" />
      <path d="M1 12c0-4 3-4 5-5h5c3 1 4 3 3 5s-3 1-4 3H4c-2 0-3-1-3-3z" fill="#fff" stroke="#222" />
    </svg>
  );
};

const Check = () => (
  <svg viewBox="0 0 14 14" className="w-[13px] h-[13px]">
    <path d="M0 6.5L3.5 5 6 8 12 .5 14 1.5 7 13.5H5z" fill="#26b33a" />
  </svg>
);

const Bulb = () => (
  <svg viewBox="0 0 14 16" className="w-[14px] h-[16px]">
    <path d="M4 1h6c1 0 1 2 0 4L8.5 10h-3L4 5C3 3 3 1 4 1z" fill="#f6d13c" stroke="#c9a21a" strokeWidth=".7" />
    <circle cx="7" cy="13" r="2" fill="#f0c030" stroke="#c9a21a" strokeWidth=".7" />
  </svg>
);

const Minus = () => (
  <div className="w-[9px] h-[9px] shrink-0 border border-[#a8a8a8] bg-white flex items-center justify-center relative">
    <div className="w-[5px] h-px bg-[#222]" />
  </div>
);

const McsIcon = () => (
  <svg viewBox="0 0 16 16" className="w-[16px] h-[16px] shrink-0">
    <path d="M4 10l8-5" fill="none" stroke="#1a8a2a" strokeWidth="1.5" />
    <path d="M3 0v10" stroke="#1a3fd0" strokeWidth="1.5" />
    <path d="M2 11l9 3" stroke="#d22" strokeWidth="2" />
    <text x="6" y="5" fontSize="6" fill="#222" fontFamily="Liberation Sans">z</text>
    <text x="12" y="6" fontSize="6" fill="#222" fontFamily="Liberation Sans">y</text>
    <text x="12" y="16" fontSize="6" fill="#222" fontFamily="Liberation Sans">x</text>
  </svg>
);

const WpIcon = () => (
  <svg viewBox="0 0 16 16" className="w-[15px] h-[15px] shrink-0">
    <path d="M1 4l7-3 7 3v9l-7 3-7-3z" fill="#8fb6ea" stroke="#5c80c4" />
    <path d="M1 4l7 3 7-3M8 7v9" fill="none" stroke="#fff" />
    <circle cx="5" cy="9" r="1.5" fill="#fff" />
  </svg>
);

const NameCell = ({ row, index }) => {
  const outer = index < 24;
  return (
    <div className="relative h-full pt-[3px] flex items-center overflow-hidden whitespace-nowrap border-r border-black text-[12.3px]">
      {outer && <span className="absolute left-[10px] top-0 bottom-0 border-l border-dotted border-[#8a8a8a]" />}
      {index === 24 && <span className="absolute left-[10px] top-0 h-[9px] border-l border-dotted border-[#8a8a8a]" />}
      {row.kind === "mcs" && (
        <div className="relative flex items-center pl-[5px]">
          <Minus />
          <span className="w-[6px] border-t border-dotted border-[#8a8a8a]" />
          <McsIcon />
          <span className="ml-[2px]">{row.name}</span>
        </div>
      )}
      {row.kind === "wp" && (
        <div className="relative flex items-center pl-[24px]">
          <Minus />
          <span className="w-[6px] border-t border-dotted border-[#8a8a8a]" />
          <WpIcon />
          <span className="ml-[3px]">{row.name}</span>
        </div>
      )}
      {row.kind === "op" && (
        <>
          <span className={`absolute left-[48px] top-0 border-l border-dotted border-[#8a8a8a] ${row.last ? "h-[11px]" : "bottom-0"}`} />
          <div className="relative flex items-center pl-[49px]">
            <span className="w-[9px] border-t border-dotted border-[#8a8a8a]" />
            <div className="w-[14px] flex justify-center shrink-0">{row.bulb ? <Bulb /> : <Check />}</div>
            <div className="ml-[1px] shrink-0"><OpIcon type={row.icon} /></div>
            <span className="ml-[3px]">{row.name}</span>
          </div>
        </>
      )}
    </div>
  );
};

const cols = "grid grid-cols-[256px_34px_56px_64px_83px_48px_52px_48px_51px_100px_79px]";
const cell = "h-full pt-[3px] flex items-center pl-[5px] border-r border-[#e6e6e6] overflow-hidden whitespace-nowrap";

const TableRow = ({ row, index }) => {
  const isOp = row.kind === "op" || row.wor;
  return (
    <div className={`${cols} h-[20px] border-b border-[#e6e6e6] ${index % 2 ? "bg-[#f7f7f7]" : "bg-white"}`}>
      <NameCell row={row} index={index} />
      <div className="h-full pt-[3px] flex items-center pl-[6px] border-r border-[#e6e6e6]">{row.kind === "op" && <Check />}</div>
      <div className={cell}>{row.tool}</div>
      <div className={cell}>{row.no}</div>
      <div className={cell}>{row.time}</div>
      <div className={cell}>{isOp && W}</div>
      <div className={cell}>{isOp && M}</div>
      <div className={cell}>{row.stock}</div>
      <div className={cell}>{row.floor}</div>
      <div className={`${cell} tracking-[0.3px]`}>{row.feed}</div>
      <div className={`${cell} [word-spacing:2px]`}>{row.speed}</div>
    </div>
  );
};

const headers = ["名", "", "", "刀具号", "时间", "几何体", "方法", "余量", "底面...", "进给", "速度"];

const NavPanel = () => (
  <div className="w-[890px] h-full bg-white pl-[7px] flex flex-col">
    <div className="h-[30px] flex items-center justify-between pl-[3px] pr-[16px] text-[13px] text-[#222] whitespace-nowrap">
      <span>工</span>
      <div className="w-[12px] h-[11px] border border-black border-t-[3px]" />
    </div>
    <div className="w-[874px] flex-1 border border-[#dcdcdc] flex flex-col text-[12px] text-[#333] overflow-hidden">
      <div className={`${cols} h-[20px] shrink-0 bg-[#f0f0f0] border-b border-[#d8d8d8]`}>
        {headers.map((h, i) => (
          <div key={i} className={`h-full pt-[2px] flex items-center border-r border-[#d8d8d8] whitespace-nowrap overflow-hidden ${i === 0 ? "pl-[6px]" : "pl-[7px]"}`}>
            {h}
          </div>
        ))}
      </div>
      {rows.map((row, i) => (
        <TableRow key={i} row={row} index={i} />
      ))}
      <div className="flex-1 flex items-center border-t border-[#9c9c9c] bg-[#f0f0f0]">
        <div className="w-[19px] flex justify-center">
          <div className="w-0 h-0 border-y-[4px] border-r-[4px] border-y-transparent border-r-[#333]" />
        </div>
        <div className="w-[811px] h-[14px] border border-[#9a9a9a] rounded-[2px] bg-linear-to-b from-[#f2f2f2] to-[#bcbcbc] flex items-center justify-center text-[8px] leading-none text-[#555] tracking-[1px]">
          |||
        </div>
        <div className="flex-1 flex justify-end pr-[8px]">
          <div className="w-0 h-0 border-y-[4px] border-l-[4px] border-y-transparent border-l-[#333]" />
        </div>
      </div>
    </div>
  </div>
);

const stripIcons = {
  gear: <FaCog className="w-[22px] h-[22px] shrink-0 -ml-[12px] text-[#555]" />,
  cubeY: <svg viewBox="0 0 15 22" className="w-[15px] h-[22px]"><path d="M0 2h4v8H0z" fill="#e8b93a" /><path d="M4 11h8" stroke="#111" /><path d="M2 14l4-2 4 2v5l-4 2-4-2z" fill="#f2c530" stroke="#a8801a" /></svg>,
  tris: <svg viewBox="0 0 15 26" className="w-[15px] h-[26px]"><path d="M8 1v10l-8-5z" fill="#1c3fd0" /><path d="M0 14l11 10H0z" fill="#c92a2a" /></svg>,
  ring: <svg viewBox="0 0 15 22" className="w-[15px] h-[22px]"><path d="M0 4h11" stroke="#111" /><circle cx="5" cy="13" r="4" fill="none" stroke="#8a3a8a" /><circle cx="5" cy="13" r="1.5" fill="#8a3a8a" /></svg>,
  lBlue: <svg viewBox="0 0 15 22" className="w-[15px] h-[22px]"><path d="M0 5h7M0 8h5M0 11h11" stroke="#2f6fd0" /><path d="M2 14v6h7l-3-3V14z" fill="#fff" stroke="#2f6fd0" /></svg>,
  orange: <svg viewBox="0 0 15 30" className="w-[15px] h-[30px]"><path d="M0 2h8v12H0z" fill="#f0a040" /><path d="M0 18l8-4 6 3v7l-8 4-6-3z" fill="#2f7fe0" /><path d="M0 18l8-4 6 3-8 3z" fill="#f2c530" /></svg>,
  machine: <svg viewBox="0 0 15 30" className="w-[15px] h-[30px]"><path d="M0 4h5v6H0zM7 2h5v5H7z" fill="#e8952a" /><path d="M3 12v14h9M0 26h13M8 14c4 1 4 6 0 7" fill="none" stroke="#444" strokeWidth="1.5" /></svg>,
  book: <svg viewBox="0 0 15 30" className="w-[15px] h-[30px]"><path d="M0 8l12-6v20L0 28z" fill="#2f8fe0" /><path d="M3 7v20M7 5v20" stroke="#14a06a" strokeWidth="1.5" /></svg>,
  wifi: <svg viewBox="0 0 15 30" className="w-[15px] h-[30px]"><path d="M0 5c8 0 13 6 13 15M0 11c5 0 8 4 8 9" fill="none" stroke="#2f7fe0" strokeWidth="2.5" /><circle cx="0" cy="20" r="5" fill="#1f6fd0" /></svg>,
  page: <svg viewBox="0 0 15 28" className="w-[15px] h-[28px]"><path d="M0 2h7l3 3v20H0z" fill="#fff" stroke="#2f7fe0" /><circle cx="3" cy="15" r="5" fill="#1f8f7f" /></svg>,
  clock: <svg viewBox="0 0 15 24" className="w-[15px] h-[24px]"><circle cx="3" cy="12" r="9" fill="#e0e6f0" stroke="#555" strokeWidth="1.5" /><path d="M3 6v6h5" stroke="#223" fill="none" /></svg>,
  tool: <svg viewBox="0 0 15 24" className="w-[15px] h-[24px]"><path d="M1 4l9 16" stroke="#222" strokeWidth="2.5" /><path d="M0 3h5" stroke="#ccc" strokeWidth="2" /></svg>,
  toolB: <svg viewBox="0 0 15 24" className="w-[15px] h-[24px]"><path d="M0 8h12" stroke="#2f7fe0" /><path d="M1 6l9 14M8 8l-5 6" stroke="#222" strokeWidth="2" /></svg>,
  wrench: <svg viewBox="0 0 15 24" className="w-[15px] h-[24px]"><path d="M0 6l10-3M3 6l6 4-5 9" stroke="#777" strokeWidth="2" fill="none" /></svg>,
  redBox: <svg viewBox="0 0 15 22" className="w-[15px] h-[22px]"><path d="M0 2h12v18H0z" fill="#fff" stroke="#777" /><path d="M1 6h9v8H1z" fill="#f07040" /><path d="M3 8l2 4 3-4z" fill="#2f5fd0" /></svg>,
  ball: <svg viewBox="0 0 15 30" className="w-[15px] h-[30px]"><circle cx="7" cy="7" r="5" fill="#44b444" /><path d="M7 12v10H0" fill="none" stroke="#333" strokeDasharray="2 1" /></svg>,
  list: <svg viewBox="0 0 15 22" className="w-[15px] h-[22px]"><path d="M-1 2h13v18H-1z" fill="#fff" stroke="#777" /><circle cx="1" cy="6" r="2" fill="#2f6fd0" /><circle cx="1" cy="11" r="2" fill="#2fa84a" /><circle cx="1" cy="16" r="2" fill="#d22" /><path d="M5 6h5M5 11h5M5 16h5" stroke="#777" /></svg>,
};

const StripGroup = ({ items, start, className, h }) => {
  let y = start;
  return (
    <div className={`w-[15px] border-r border-[#a8a8a8] overflow-hidden ${className}`} style={{ height: h }}>
      {items.map(([center, name, size], i) => {
        const gap = center - size / 2 - y;
        y = center + size / 2;
        return (
          <div key={i} className="w-[15px] flex items-center" style={{ marginTop: gap, height: size }}>
            {stripIcons[name]}
          </div>
        );
      })}
    </div>
  );
};

const LeftStrip = () => (
  <div className="w-[15px] h-full shrink-0 flex flex-col">
    <StripGroup
      start={186}
      h={167}
      className="bg-[#d8d8d8] border-b"
      items={[[200, "gear", 22], [250, "cubeY", 22], [293, "tris", 26], [338, "ring", 22]]}
    />
    <StripGroup start={353} h={45} className="bg-white" items={[[378, "lBlue", 22]]} />
    <StripGroup
      start={398}
      h={573}
      className="bg-[#d8d8d8] border-t"
      items={[
        [417, "orange", 30], [460, "machine", 30], [502, "book", 30], [555, "wifi", 30], [610, "page", 28], [663, "clock", 24], [708, "tool", 24],
        [751, "toolB", 24], [788, "wrench", 24], [830, "redBox", 22], [871, "ball", 30], [916, "list", 22],
      ]}
    />
  </div>
);

const dots = Array.from({ length: 23 }, (_, i) => [1152 + i * 16.3, 775 - i * 2.9]);

const Viewport = () => (
  <div className="flex-1 h-full relative border-l-2 border-[#a9a9a9] bg-linear-to-b from-[#b9babd] to-[#e7e8ea] to-80%">
    <svg viewBox="907 186 932 785" className="w-full h-full block" fontFamily="Liberation Sans" fontSize="12">
      <path d="M907 740H1839" stroke="#222" />
      <path d="M1150 186V971" stroke="#222" />
      {/* offset plane */}
      <path d="M988 547L1584 439 1606 543 1011 652Z" fill="#e0a877" fillOpacity=".42" stroke="#ed7d15" strokeWidth="1.8" />
      {/* part */}
      <path d="M1046 788L1053 827 1122 815Q1130 821 1136 822L1148 823 1531 753 1540 748Q1543 741 1552 736L1622 723 1615 686 1547 698 1525 717 1149 784 1117 775Z" fill="#8b5500" stroke="#2b1a00" strokeWidth=".8" />
      <path d="M1117 775Q1124 780 1130 783L1149 785 1148 823 1136 822Q1130 821 1123 815Z" fill="#b87a10" />
      <path d="M1127 782L1136 822 1148 823 1145 784Z" fill="#d8901c" />
      <path d="M1525 717L1547 698 1552 736Q1543 741 1540 748L1531 753Z" fill="#c8820f" />
      <path d="M1535 710L1540 748" stroke="#d8981e" strokeWidth="5" />
      <path d="M1525 717L1531 753M1547 698L1552 736M1117 775L1122 815M1136 782L1141 822" stroke="#2b2b2b" strokeWidth=".8" />
      <path d="M1031 714L1599 611 1615 686 1547 698Q1540 699 1535 708L1525 716 1149 784Q1136 786 1127 780L1117 775 1046 788Z" fill="#ffcf5c" stroke="#f6a44e" strokeWidth="2.2" />
      <ellipse cx="1070" cy="746" rx="13" ry="9" fill="#f0a33c" />
      <ellipse cx="1070" cy="746" rx="9" ry="6" fill="#8b5500" />
      <ellipse cx="1576" cy="653" rx="13" ry="9" fill="#f0a33c" />
      <ellipse cx="1576" cy="653" rx="9" ry="6" fill="#8b5500" />
      {dots.map(([x, y], i) => (
        <circle key={i} cx={x} cy={y} r="2.8" fill="#f5a55c" />
      ))}
      {/* crosshair redrawn over the part */}
      <path d="M1035 740H1117M1181 740H1500" stroke="#1a3fd0" strokeWidth="1.3" />
      <path d="M1500 740H1542" stroke="#5fb4e0" strokeWidth="1.3" />
      <path d="M1150 680V707M1150 773V971" stroke="#5fb4c8" />
      {/* csys box */}
      <path d="M1321 685L1387 674" stroke="#2a4ae0" />
      <path d="M1387 674L1404 767 1336 778 1321 685" fill="none" stroke="#e2e2e2" />
      {/* axes */}
      <path d="M1157 728L1130 575" stroke="#1a78b4" strokeWidth="2" />
      <path d="M1128 557L1124 572 1128 571 1134 570Z" fill="#1a78c8" />
      <path d="M1316 663L1306 600" stroke="#2a7a2a" strokeWidth="2" />
      <path d="M1303 585L1301 603 1309 602Z" fill="#2a7a2a" />
      <path d="M1316 663L1329 727" stroke="#1a4ae0" strokeWidth="2.5" />
      <path d="M1329 745L1325 724 1332 723Z" fill="#1a4ae0" />
      <path d="M1332 745L1344 800" stroke="#2a4ae0" />
      <path d="M1346 817L1342 802 1349 801Z" fill="#1a4ae0" />
      <path d="M1311 640L1315 650 1317 640Z" fill="#1a4ae0" />
      <path d="M1318 666L1400 650" stroke="#c83a20" strokeWidth="2" />
      <path d="M1419 648L1398 646 1400 654Z" fill="#ea3a3a" />
      <path d="M1332 737L1459 715" stroke="#dcdcdc" />
      <path d="M1447 714L1462 714 1449 719Z" fill="#fff" />
      <path d="M1071 590L1128 570" stroke="#a8825a" />
      <text x="1306" y="585" fill="#2aa84a">YM</text>
      <text x="1402" y="644" fill="#e03a3a">XM</text>
      <text x="1310" y="740" fill="#1a3fd0">ZM</text>
      <text x="1306" y="634" fill="#2a4ae0">Y</text>
      <text x="1343" y="828" fill="#2a4ae0">Z</text>
      <text x="1461" y="720" fill="#eee">X</text>
      {/* small triad */}
      <path d="M968 898L992 894 997 929 972 933Z" fill="#d8d8d8" stroke="#b0b0b0" />
      <path d="M969 912L993 909" stroke="#b0b0b0" />
      <path d="M969 918L1000 913" stroke="#c8ae96" strokeWidth="2" />
      <path d="M996 913L1012 910 998 915Z" fill="#e02a2a" stroke="#e02a2a" />
      <path d="M968 918L963 887" stroke="#2a6a2a" strokeWidth="3" />
      <path d="M969 919L974 942" stroke="#1a4ae0" strokeWidth="3" />
      <text x="958" y="885" fill="#6ab46a" fontSize="11">Y</text>
      <text x="971" y="953" fill="#2a6ae0" fontSize="11">Z</text>
      <text x="1012" y="915" fill="#e07a7a" fontSize="11">X</text>
    </svg>
    <div className="absolute left-[7px] top-[392px] w-[157px] h-[32px] bg-white border border-[#b8c4c2] flex items-center text-[12px] text-[#222]">
      <div className="ml-[2px] w-[5px] h-[26px] border-x-2 border-dotted border-[#bbb]" />
      <span className="ml-[11px]">距离</span>
      <div className="ml-[2px] w-[90px] h-[26px] border border-[#b8c4c2] flex items-center">
        <span className="flex-1 pl-[5px]">50</span>
        <span className="w-[35px] h-full border-l border-r border-[#9a9a9a] flex items-center justify-center">mm</span>
      </div>
      <div className="ml-[7px] w-0 h-0 border-x-[4px] border-t-[5px] border-x-transparent border-t-[#222]" />
    </div>
  </div>
);

const SectionHead = ({ title, open = true }) => (
  <div className="h-[24px] mb-[6px] flex items-center justify-between pl-[8px] pr-[4px] text-[14px] text-[#2b8fca]">
    <span>{title}</span>
    {open ? <ChevronUp className="w-[17px] h-[17px]" strokeWidth={3} /> : <ChevronDown className="w-[17px] h-[17px]" strokeWidth={3} />}
  </div>
);

const DropCaret = () => <div className="w-0 h-0 border-x-[4px] border-t-[5px] border-x-transparent border-t-[#222]" />;

const Dialog = () => (
  <div className="absolute left-[32px] top-0 w-[329px] h-[334px] bg-[#e8e8e8] border border-[#b5b5b5] border-t-0 text-[12px] text-[#222]">
    <div className="h-[24px] bg-[#5f8a85] flex items-center pl-[7px] pr-[8px] text-white">
      <FaCog className="w-[16px] h-[16px]" />
      <span className="ml-[9px] text-[13px]">刨</span>
      <RotateCw className="ml-auto w-[14px] h-[14px]" strokeWidth={2.5} />
      <CloseIcon className="ml-[6px] w-[16px] h-[16px]" strokeWidth={3} />
    </div>
    <div className="mx-[5px] mt-[4px] h-[64px] bg-white border-b border-[#d4d4d4]">
      <SectionHead title="类型" />
      <div className="mx-[9px] h-[26px] border border-[#a0a0a0] flex items-center pl-[5px] pr-[8px]">
        <svg viewBox="0 0 16 16" className="w-[16px] h-[16px]">
          <path d="M2 4l9-1v11l-7 1z" fill="#fff" stroke="#333" />
          <path d="M11 6l3-4" stroke="#d8a010" strokeWidth="2" />
        </svg>
        <span className="ml-[4px]">自动判断</span>
        <div className="ml-auto"><DropCaret /></div>
      </div>
    </div>
    <div className="mx-[5px] mt-[4px] h-[70px] bg-white border-b border-[#d4d4d4]">
      <SectionHead title="要定义平面的对象" />
      <div className="mx-[9px] h-[32px] flex items-center">
        <div className="w-[238px] h-full bg-[#fdd56a] flex items-center pl-[2px]">
          <svg viewBox="0 0 14 14" className="w-[13px] h-[13px]"><path d="M0 6.5L3.5 5 6 8 12 .5 14 1.5 7 13.5H5z" fill="#17b13a" /></svg>
          <span className="ml-[6px]">选择对象 (1)</span>
        </div>
        <div className="ml-[2px] w-[24px] h-[24px] border border-[#9a9a9a] bg-white">
          <svg viewBox="0 0 24 24" className="w-full h-full">
            <path d="M13 4v10M8 9h10" stroke="#111" />
            <path d="M4 14c0 5 3 6 6 6M8 18l2 2-2 2" fill="none" stroke="#e2762a" strokeWidth="1.5" />
            <path d="M13 19h2v2h-2zM17 19h2v2h-2zM21 19h2v2h-2z" fill="#222" />
          </svg>
        </div>
        <div className="ml-[2px] w-[32px] h-full bg-[#fbe9ae] border border-[#f0d896]">
          <svg viewBox="0 0 32 32" className="w-full h-full">
            <circle cx="16" cy="16" r="5" fill="none" stroke="#c81e1e" strokeWidth="1.3" />
            <path d="M16 6v20M6 16h20" stroke="#111" />
            <path d="M16 11v10M11 16h10" stroke="#c81e1e" strokeWidth="1.3" />
          </svg>
        </div>
      </div>
    </div>
    <div className="mx-[5px] mt-[4px] h-[89px] bg-white border-b border-[#d4d4d4]">
      <SectionHead title="偏置" />
      <div className="h-[25px] flex items-center pl-[9px] pr-[9px]">
        <span>距离</span>
        <div className="ml-auto w-[141px] h-full border border-[#a0a0a0] flex items-center pl-[4px] pr-[5px] text-[13px]">
          <span className="h-[17px] leading-[17px] px-[1px] bg-[#3399ff] text-white border-l border-[#333]">50</span>
          <span className="ml-auto">mm</span>
          <div className="ml-[20px]"><DropCaret /></div>
        </div>
      </div>
      <div className="mt-[2px] h-[24px] flex items-center pl-[9px] pr-[9px]">
        <span>反向</span>
        <div className="ml-auto w-[24px] h-[24px] border border-[#9a9a9a]">
          <svg viewBox="0 0 24 24" className="w-full h-full">
            <path d="M5 5l14 14" stroke="#111" strokeWidth="1.3" />
            <path d="M20 4l-6 1 2 2zM4 20l6-1-2-2z" fill="#1c3fd0" stroke="#1c3fd0" />
            <path d="M15 8l2-2M7 18l2-2" stroke="#1c3fd0" strokeWidth="2" />
          </svg>
        </div>
      </div>
    </div>
    <div className="mx-[5px] mt-[4px] h-[23px] bg-white border-b border-[#d4d4d4] overflow-hidden">
      <SectionHead title="平面方位" open={false} />
    </div>
    <div className="mt-[12px] flex justify-end gap-[5px] pr-[15px] text-[13px]">
      <button className="w-[54px] h-[25px] bg-[#9fcbe8] border border-[#4da0e0]">确定</button>
      <button className="w-[54px] h-[25px] bg-[#cfcfcf] border border-[#a9a9a9]">取消</button>
    </div>
  </div>
);

export default function App() {
  return (
    <div
      className="relative w-[1839px] h-[971px] overflow-hidden bg-white flex flex-col text-[#222]"
      style={{ fontFamily: '"Noto Sans", "Noto Sans CJK SC", sans-serif' }}
    >
      <div className="h-[26px] shrink-0 flex items-center overflow-hidden">
        <span className="-ml-[15px] text-[24px] leading-none font-bold text-[#7d9492]" style={{ fontFamily: '"Liberation Sans", sans-serif' }}>NX</span>
        <div className="ml-[5px] w-px h-[20px] bg-[#ccc]" />
        <div className="ml-[4px] w-[3px] h-[8px] bg-[#c98a2a]" />
        <span className="ml-auto mr-[26px] mt-[2px] text-[13px] font-bold tracking-[0.4px] text-[#109a9a]">SIEMENS</span>
      </div>
      <div className="h-[27px] shrink-0 bg-[#c7d8d5] flex items-center text-[12px] text-[#333] whitespace-nowrap">
        {menu.map(([label, x], i) => (
          <span key={label} className="w-0" style={{ marginLeft: i === 0 ? x : x - menu[i - 1][1] }}>{label}</span>
        ))}
      </div>
      <Toolbar items={row1} className="h-[34px] shrink-0" />
      <Toolbar items={row2} className="h-[34px] shrink-0" />
      <Toolbar items={row3} className="h-[33px] shrink-0" />
      <Toolbar items={row4} className="h-[32px] shrink-0 border-b-[#9a9a9a]" />
      <div className="flex-1 flex min-h-0">
        <LeftStrip />
        <NavPanel />
        <Viewport />
      </div>
      <Dialog />
      {/* red annotation arrows */}
      <svg viewBox="0 0 1839 971" className="absolute inset-0 w-full h-full pointer-events-none">
        <path d="M243 220L262 222 260 227 335 273 448 346.5 700 510 921 655 700 516 448 356.5 335 285 256 232 251 234Z" fill="#fb3b3b" />
        <path d="M1157 721L1176 719 1173 725 1270 756 1390 802 1672 909 1390 810 1270 768 1172 729 1170 733Z" fill="#fb3b3b" />
      </svg>
    </div>
  );
}
